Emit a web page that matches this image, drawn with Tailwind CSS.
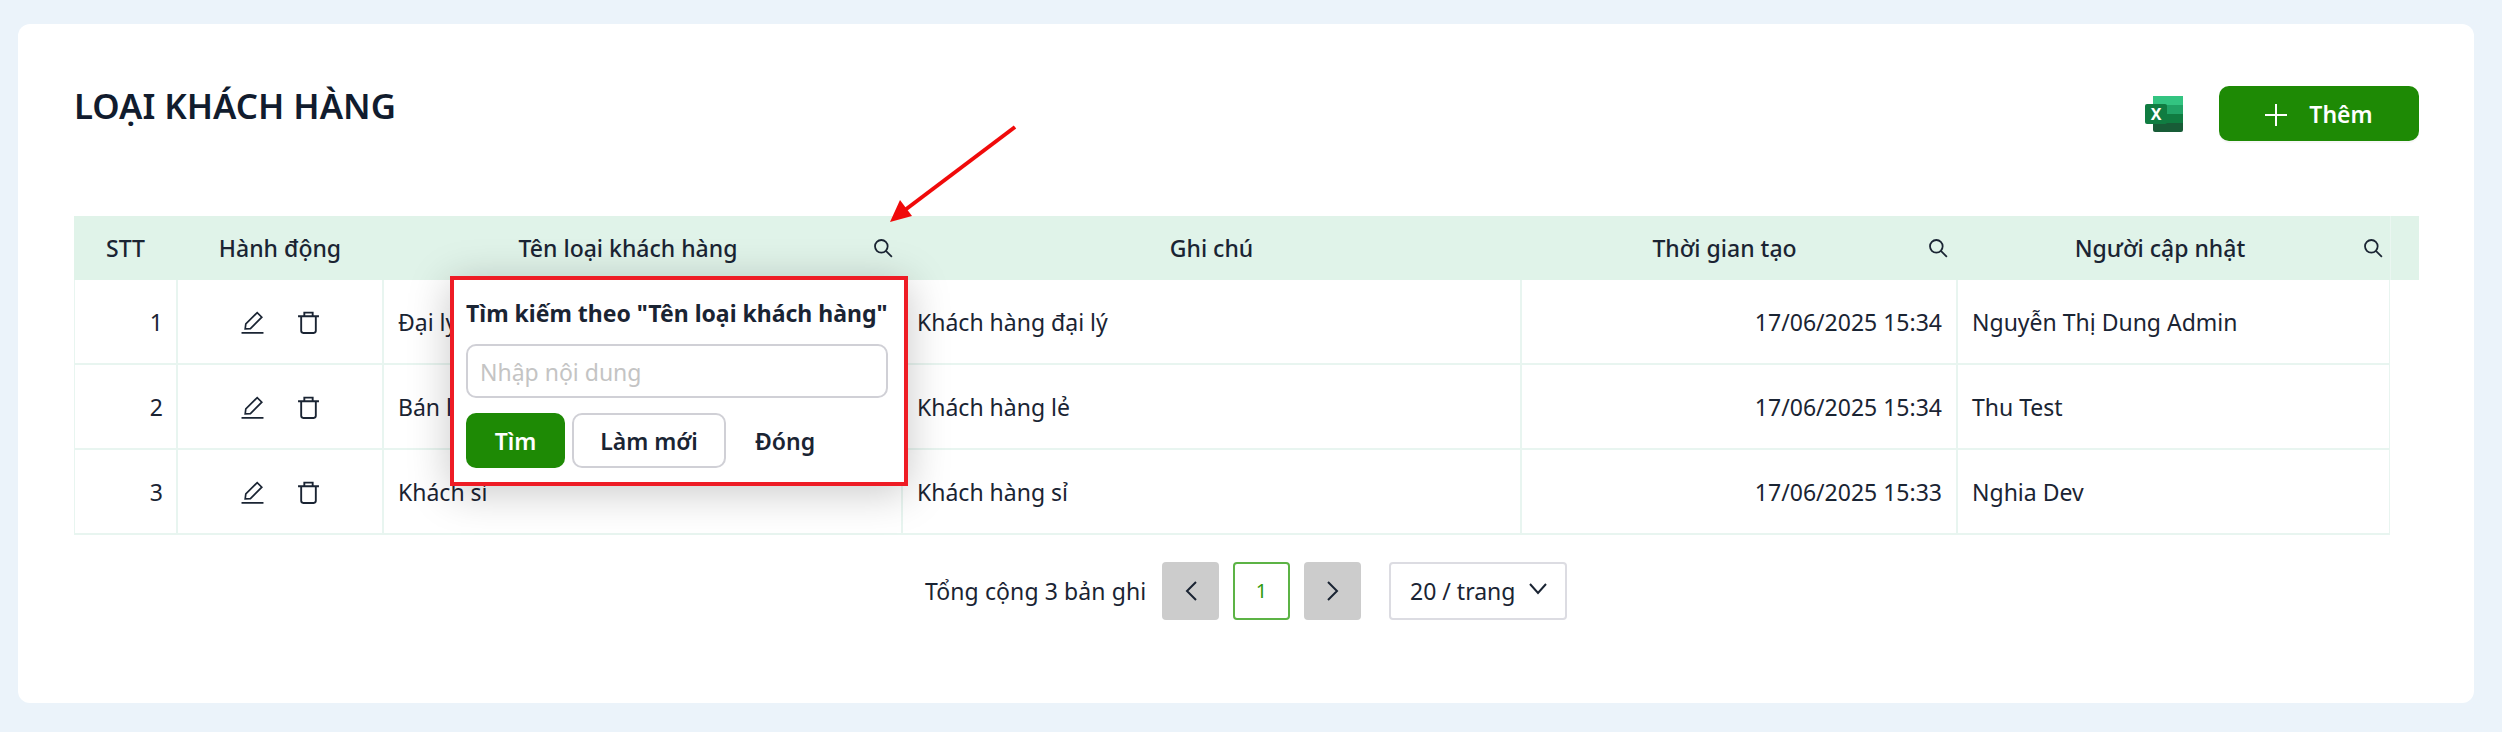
<!DOCTYPE html>
<html lang="vi">
<head>
<meta charset="utf-8">
<title>Loại khách hàng</title>
<script src="https://cdn.jsdelivr.net/npm/@tailwindcss/browser@4"></script>
</head>
<body class="m-0 h-[732px] w-[2502px] overflow-hidden bg-[#ebf3fa] pt-[24px] pl-[18px] pr-[28px] font-['Noto_Sans',sans-serif] text-[#1a2433]">
<main class="relative h-[679px] rounded-[12px] bg-white pl-[56px] pr-[55px]">
  <header class="flex h-[192px] items-start justify-between">
    <h1 class="mt-[57px] text-[34.8px] leading-[50px] font-semibold text-[#111c2e]">LOẠI KHÁCH HÀNG</h1>
    <div class="mt-[62px] flex items-center gap-[36px]">
      <svg class="h-[36px] w-[38px]" viewBox="0 0 38 36">
        <rect x="8" y="0" width="30" height="36" rx="2" fill="#185c37"/>
        <rect x="8" y="0" width="30" height="9" fill="#33c481"/>
        <rect x="8" y="9" width="30" height="9" fill="#21a366"/>
        <rect x="8" y="18" width="30" height="9" fill="#107c41"/>
        <rect x="0" y="8" width="22" height="20" rx="2" fill="#107c41"/>
        <text x="11" y="24" text-anchor="middle" fill="#fff" font-size="16" font-weight="700" font-family="Noto Sans">X</text>
      </svg>
      <button class="flex h-[55px] w-[200px] items-center justify-center gap-[22px] rounded-[10px] bg-[#1e8a05] pt-[2px] text-[23px] font-semibold text-white shadow-[0_2px_0_rgba(0,0,0,0.03)]">
        <svg class="h-[22px] w-[22px]" viewBox="0 0 22 22" fill="none" stroke="currentColor" stroke-width="2"><path d="M11 0v22M0 11h22"/></svg>
        <span>Thêm</span>
      </button>
    </div>
  </header>

  <section class="relative">
    <div class="grid h-[64px] grid-cols-[103px_206px_519px_619px_436px_433px_29px] items-center bg-[#e0f3e9] text-[23px] font-medium">
      <div class="text-center">STT</div>
      <div class="text-center">Hành động</div>
      <div class="flex items-center"><span class="flex-1 text-center">Tên loại khách hàng</span><svg class="mr-[9px] h-[20px] w-[20px]" viewBox="0 0 18 18" fill="none" stroke="currentColor" stroke-width="1.6"><circle cx="7.5" cy="7.5" r="5.7"/><path d="M11.6 11.6l5.4 5.4"/></svg></div>
      <div class="text-center">Ghi chú</div>
      <div class="flex items-center"><span class="flex-1 text-center">Thời gian tạo</span><svg class="mr-[9px] h-[20px] w-[20px]" viewBox="0 0 18 18" fill="none" stroke="currentColor" stroke-width="1.6"><circle cx="7.5" cy="7.5" r="5.7"/><path d="M11.6 11.6l5.4 5.4"/></svg></div>
      <div class="flex items-center"><span class="flex-1 text-center">Người cập nhật</span><svg class="mr-[7px] h-[20px] w-[20px]" viewBox="0 0 18 18" fill="none" stroke="currentColor" stroke-width="1.6"><circle cx="7.5" cy="7.5" r="5.7"/><path d="M11.6 11.6l5.4 5.4"/></svg></div>
      <div class="h-full border-l border-[#eaf6f1]"></div>
    </div>

    <div class="w-[2316px] border-x border-b-2 border-[#e8f5f0] text-[23px]">
      <div class="grid h-[85px] grid-cols-[103px_206px_519px_619px_436px_431px] items-center divide-x-2 divide-[#e8f5f0] border-b-2 border-[#e8f5f0] *:flex *:h-full *:items-center *:pt-[2px]">
        <div class="justify-end pr-[13px]">1</div>
        <div class="justify-center gap-[33px]">
          <svg class="h-[23px] w-[23px]" viewBox="0 0 22 22" fill="none" stroke="currentColor" stroke-width="1.6"><path d="M4 17l.6-4.6L15.5 1.5l4.4 4.4L9 16.8zM0.5 21h21"/></svg>
          <svg class="h-[23px] w-[23px]" viewBox="0 0 22 22" fill="none" stroke="currentColor" stroke-width="1.8"><path d="M1 5h20M7 5V1.5h8V5M4 5v14a2 2 0 0 0 2 2h10a2 2 0 0 0 2-2V5"/></svg>
        </div>
        <div class="pl-[14px]">Đại lý</div>
        <div class="pl-[14px]">Khách hàng đại lý</div>
        <div class="justify-end pr-[14px]">17/06/2025 15:34</div>
        <div class="pl-[14px]">Nguyễn Thị Dung Admin</div>
      </div>
      <div class="grid h-[85px] grid-cols-[103px_206px_519px_619px_436px_431px] items-center divide-x-2 divide-[#e8f5f0] border-b-2 border-[#e8f5f0] *:flex *:h-full *:items-center *:pt-[2px]">
        <div class="justify-end pr-[13px]">2</div>
        <div class="justify-center gap-[33px]">
          <svg class="h-[23px] w-[23px]" viewBox="0 0 22 22" fill="none" stroke="currentColor" stroke-width="1.6"><path d="M4 17l.6-4.6L15.5 1.5l4.4 4.4L9 16.8zM0.5 21h21"/></svg>
          <svg class="h-[23px] w-[23px]" viewBox="0 0 22 22" fill="none" stroke="currentColor" stroke-width="1.8"><path d="M1 5h20M7 5V1.5h8V5M4 5v14a2 2 0 0 0 2 2h10a2 2 0 0 0 2-2V5"/></svg>
        </div>
        <div class="pl-[14px]">Bán lẻ</div>
        <div class="pl-[14px]">Khách hàng lẻ</div>
        <div class="justify-end pr-[14px]">17/06/2025 15:34</div>
        <div class="pl-[14px]">Thu Test</div>
      </div>
      <div class="grid h-[83px] grid-cols-[103px_206px_519px_619px_436px_431px] items-center divide-x-2 divide-[#e8f5f0] *:flex *:h-full *:items-center *:pt-[2px]">
        <div class="justify-end pr-[13px]">3</div>
        <div class="justify-center gap-[33px]">
          <svg class="h-[23px] w-[23px]" viewBox="0 0 22 22" fill="none" stroke="currentColor" stroke-width="1.6"><path d="M4 17l.6-4.6L15.5 1.5l4.4 4.4L9 16.8zM0.5 21h21"/></svg>
          <svg class="h-[23px] w-[23px]" viewBox="0 0 22 22" fill="none" stroke="currentColor" stroke-width="1.8"><path d="M1 5h20M7 5V1.5h8V5M4 5v14a2 2 0 0 0 2 2h10a2 2 0 0 0 2-2V5"/></svg>
        </div>
        <div class="pl-[14px]">Khách sỉ</div>
        <div class="pl-[14px]">Khách hàng sỉ</div>
        <div class="justify-end pr-[14px]">17/06/2025 15:33</div>
        <div class="pl-[14px]">Nghia Dev</div>
      </div>
    </div>

    <div class="absolute top-[60px] left-[376px] h-[210px] w-[458px] border-[4px] border-[#ee1c25] bg-white px-[12px] shadow-[0_6px_40px_rgba(0,0,0,0.22)]">
      <p class="mt-[17px] text-[23px] leading-[32px] font-bold whitespace-nowrap">Tìm kiếm theo "Tên loại khách hàng"</p>
      <div class="mt-[15px] flex h-[54px] w-[422px] items-center rounded-[10px] border-2 border-[#d0d0d6] px-[12px] pt-[2px] text-[23px] text-[#c4c4c4]">Nhập nội dung</div>
      <div class="mt-[15px] flex h-[55px] items-center gap-[7px] text-[23px] font-semibold">
        <button class="h-full w-[99px] rounded-[10px] bg-[#1e8a05] pt-[1px] text-white">Tìm</button>
        <button class="h-full w-[154px] rounded-[10px] border-2 border-[#d0d0d6] pt-[1px]">Làm mới</button>
        <button class="h-full w-[104px] pt-[1px]">Đóng</button>
      </div>
    </div>
  </section>

  <nav class="mt-[27px] flex h-[58px] items-center pl-[851px] text-[23px]">
    <span class="w-[237px] tracking-[0.1px]">Tổng cộng 3 bản ghi</span>
    <button class="flex h-full w-[57px] items-center justify-center rounded-[4px] bg-[#cccccc]"><svg class="h-[20px] w-[12px]" viewBox="0 0 12 20" fill="none" stroke="currentColor" stroke-width="2"><path d="M11 1L2 10l9 9"/></svg></button>
    <button class="ml-[14px] h-full w-[57px] rounded-[4px] border-2 border-[#5cb345] text-[20px] text-[#2f9a10]">1</button>
    <button class="ml-[14px] flex h-full w-[57px] items-center justify-center rounded-[4px] bg-[#cccccc]"><svg class="h-[20px] w-[12px]" viewBox="0 0 12 20" fill="none" stroke="currentColor" stroke-width="2"><path d="M1 1l9 9-9 9"/></svg></button>
    <div class="ml-[28px] flex h-full w-[178px] items-center gap-[14px] rounded-[4px] border-2 border-[#dcdce2] pl-[19px]"><span>20 / trang</span><svg class="mb-[4px] h-[12px] w-[18px]" viewBox="0 0 18 12" fill="none" stroke="currentColor" stroke-width="2"><path d="M1 1l8 9 8-9"/></svg></div>
  </nav>

  <svg class="pointer-events-none absolute top-[96px] left-[865px] h-[110px] w-[140px]" viewBox="0 0 140 110" fill="none">
    <path d="M132 7L18 93" stroke="#f00a0a" stroke-width="4"/>
    <path d="M7 102L29 96 17 80z" fill="#f00a0a"/>
  </svg>
</main>
</body>
</html>
